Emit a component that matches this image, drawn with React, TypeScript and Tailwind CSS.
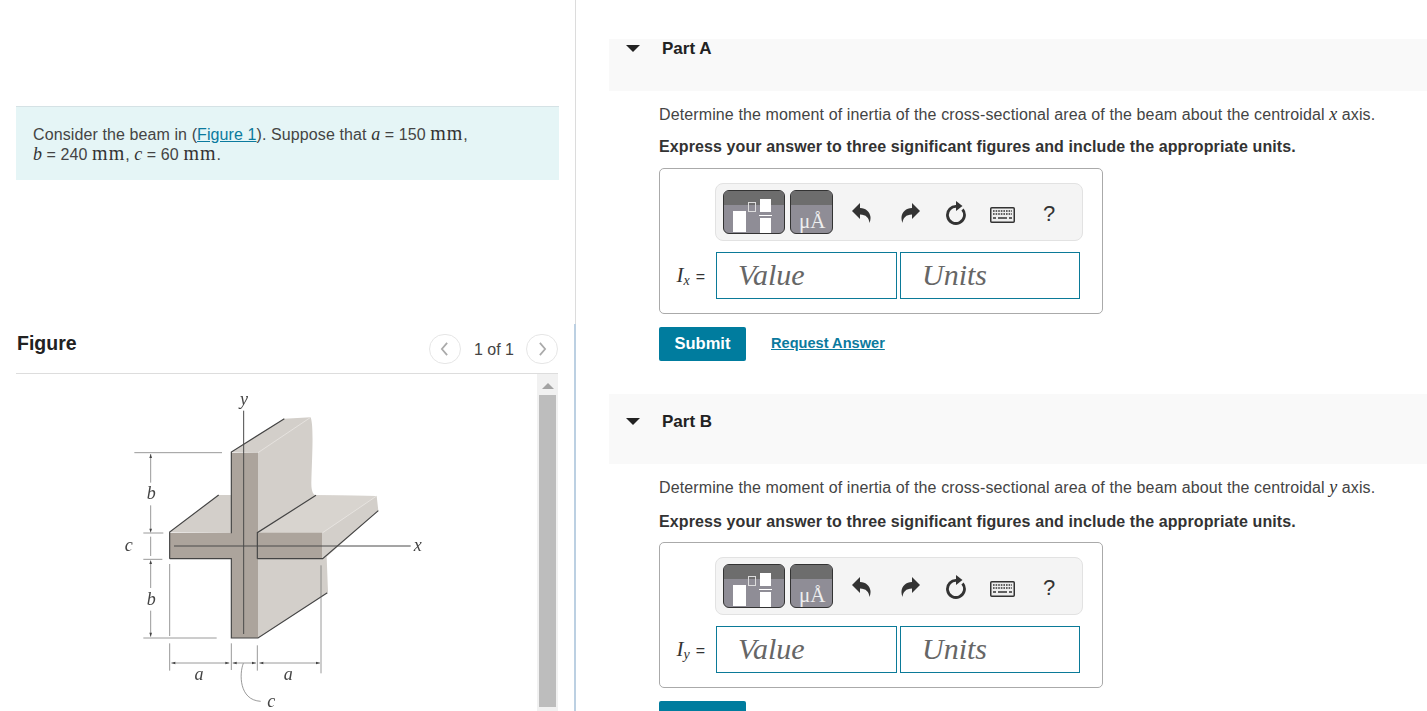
import React from 'react'

const sans = "font-['Liberation_Sans',Arial,sans-serif]"
const serif = "font-['Liberation_Serif','Times_New_Roman',serif]"

function Var({ children }: { children: React.ReactNode }) {
    return <span className={`${serif} italic text-[18px] leading-none text-[#333] tracking-normal`}>{children}</span>
}

function Mm() {
    return <span className={`${serif} text-[20px] leading-none text-[#333] tracking-[1px]`}>mm</span>
}

function BeamFigure() {
    return (
        <svg viewBox="0 0 1020 993" width={340} height={331} className="blur-[0.5px]">
            {/* top faces */}
            <path d="M394 216 L553 116 L632 112 C642 140 636 230 634 310 C634 335 640 345 648 346 L830 348 L835 392 L680 530 L684 636 L474 774 L474 218 Z" fill="#d3cfca" />
            <path d="M209 456 L356 345 L394 345 L394 458 Z" fill="#d3cfca" />
            <path d="M472 458 L648 346 L830 348 L668 460 Z" fill="#d8d4cf" />
            {/* cut section */}
            <path d="M394 218 H474 V458 H666 V536 H474 V774 H394 V536 H209 V458 H394 Z" fill="#aca49c" />
            {/* dark edges */}
            <g fill="none" stroke="#444" strokeWidth="3.5">
                <path d="M394 460 V216 L553 116" />
                <path d="M209 536 V456 L356 345" />
                <path d="M209 536 H394 V774 H474 L682 638" />
                <path d="M472 536 V458 L648 346" />
                <path d="M472 536 H668 L835 392" />
            </g>
            <g fill="none" stroke="#efece8" strokeWidth="2">
                <path d="M474 218 L632 112" />
                <path d="M668 458 L830 348" />
            </g>
            {/* axes */}
            <g fill="none" stroke="#4a4a4a" strokeWidth="3">
                <path d="M431 92 V762" />
                <path d="M222 498 H932" />
            </g>
            {/* dimension lines */}
            <g fill="none" stroke="#666" strokeWidth="2">
                <path d="M103 218 H366" />
                <path d="M130 459 H190" />
                <path d="M130 538 H187" />
                <path d="M130 774 H350" />
                <path d="M152 222 V308" />
                <path d="M152 376 V448" />
                <path d="M152 470 V528" />
                <path d="M152 546 V624" />
                <path d="M152 692 V770" />
                <path d="M209 552 V768" />
                <path d="M663 556 V880" />
                <path d="M209 790 V872" />
                <path d="M394 790 V870" />
                <path d="M472 796 V872" />
                <path d="M214 849 H388" />
                <path d="M398 849 H468" />
                <path d="M478 849 H660" />
                <path d="M430 850 C418 880 416 960 482 964" />
            </g>
            <g fill="#444">
                <path d="M152 222 l-4 12 h8 Z" />
                <path d="M152 458 l-4 -12 h8 Z" />
                <path d="M152 770 l-4 -12 h8 Z" />
                <path d="M152 540 l-4 12 h8 Z" />
                <path d="M214 849 l12 -4 v8 Z" />
                <path d="M388 849 l-12 -4 v8 Z" />
                <path d="M398 849 l12 -4 v8 Z" />
                <path d="M468 849 l-12 -4 v8 Z" />
                <path d="M478 849 l12 -4 v8 Z" />
                <path d="M660 849 l-12 -4 v8 Z" />
            </g>
            <g className={`${serif} italic`} fill="#444" fontSize="54" textAnchor="middle">
                <text x="432" y="74">y</text>
                <text x="154" y="358">b</text>
                <text x="86" y="514">c</text>
                <text x="154" y="674">b</text>
                <text x="953" y="514">x</text>
                <text x="297" y="900">a</text>
                <text x="565" y="900">a</text>
                <text x="514" y="982">c</text>
            </g>
        </svg>
    )
}

function Toolbar() {
    return (
        <div className="ml-[55px] w-[368px] h-[58px] rounded-[8px] border border-[#e2e2e2] bg-[#f4f4f4] flex items-center pl-[7px]">
            <div className="relative w-[62px] h-[44px] rounded-[6px] border border-[#333] overflow-hidden bg-[#8f8d96]">
                <div className="h-[14px] bg-[#6d6d6d]" />
                <div className="absolute left-[9px] top-[20px] w-[13px] h-[21px] bg-white" />
                <div className="absolute left-[24px] top-[11px] w-[8px] h-[10px] border border-[#ddd]" />
                <div className="absolute left-[36px] top-[8px] w-[11px] h-[13px] bg-white" />
                <div className="absolute left-[35px] top-[24px] w-[13px] h-[1px] bg-white" />
                <div className="absolute left-[36px] top-[27px] w-[11px] h-[15px] bg-white" />
            </div>
            <div className={`relative ml-[5px] w-[43px] h-[44px] rounded-[6px] border border-[#333] overflow-hidden bg-[#8f8d96] ${serif}`}>
                <div className="h-[14px] bg-[#6d6d6d]" />
                <span className="absolute left-[8px] bottom-[-1px] text-[21px] leading-[26px] text-[#eee]">μÅ</span>
            </div>
            <svg viewBox="0 0 19 20" width={19} height={20} className="ml-[19px] mt-[2px] text-[#333]" fill="currentColor">
                <path d="M0 8 L8 0 V5 C14 5 18 9 18.5 14 C18.7 16.5 18 18.5 17.5 20 C17 15 14 11.5 8 11.5 V16 Z" />
            </svg>
            <svg viewBox="0 0 19 20" width={19} height={20} className="ml-[30px] mt-[2px] text-[#333]" fill="currentColor">
                <path d="M19 8 L11 0 V5 C5 5 1 9 0.5 14 C0.3 16.5 1 18.5 1.5 20 C2 15 5 11.5 11 11.5 V16 Z" />
            </svg>
            <svg viewBox="0 0 22 24" width={22} height={24} className="ml-[25px] mt-[2px] text-[#333]">
                <path d="M12 5.5 A8.5 8.5 0 1 0 17.5 8.5" fill="none" stroke="currentColor" strokeWidth="2.8" />
                <path d="M11 0 L17.5 5 L11 10 Z" fill="currentColor" />
            </svg>
            <svg viewBox="0 0 25 16" width={25} height={16} className="ml-[23px] mt-[5px] text-[#333]">
                <rect x="0.75" y="0.75" width="23.5" height="14.5" rx="1" fill="#eee" stroke="currentColor" strokeWidth="1.5" />
                <path d="M3 4h19M3 7h19" stroke="currentColor" strokeWidth="1.6" strokeDasharray="1.6 1" />
                <path d="M3 11h3M8 11h9M19 11h3" stroke="currentColor" strokeWidth="1.5" />
            </svg>
            <span className={`${sans} ml-[28px] mt-[3px] text-[22px] text-[#333] leading-none`}>?</span>
        </div>
    )
}

function AnswerBox({ sub }: { sub: string }) {
    return (
        <div className="w-[444px] h-[146px] rounded-[5px] border border-[#aaa] bg-white pt-[14px]">
            <Toolbar />
            <div className="flex items-center mt-[11px]">
                <div className="w-[56px] flex justify-end items-baseline pr-[11px] text-[#333]">
                    <span className={`${serif} italic text-[21px] leading-none`}>I</span>
                    <span className={`${serif} italic text-[14px] leading-none translate-y-[3px] mr-[6px]`}>{sub}</span>
                    <span className={`${sans} text-[16px] leading-none`}>=</span>
                </div>
                <div className={`${serif} italic text-[30px] text-[#666] w-[181px] h-[47px] border border-[#0b7a98] pl-[21px] pb-[2px] flex items-center`}>Value</div>
                <div className={`${serif} italic text-[30px] text-[#666] ml-[3px] w-[180px] h-[47px] border border-[#0b7a98] pl-[21px] pb-[2px] flex items-center`}>Units</div>
            </div>
        </div>
    )
}

function PartHeader({ label, tall }: { label: string; tall: boolean }) {
    return (
        <div className={`relative bg-[#f9f9f9] pl-[53px] ${tall ? 'h-[70px] pt-[18px]' : 'h-[52px]'}`}>
            <div className={`absolute left-[17px] ${tall ? 'top-[24px]' : 'top-[6px]'} w-0 h-0 border-l-[7px] border-r-[7px] border-t-[7px] border-l-transparent border-r-transparent border-t-[#222]`} />
            <h2 className="text-[17px] leading-[20px] font-bold text-[#222]">{label}</h2>
        </div>
    )
}

export default function App() {
    return (
        <div className={`${sans} flex h-[711px] w-[1427px] overflow-hidden bg-white text-[#333]`}>
            {/* left column */}
            <div className="w-[576px] shrink-0 h-full border-r border-[#dcdcdc] relative">
                <div className="absolute right-[-1px] top-[324px] bottom-0 w-[2px] bg-[#bcd0e2]" />
                <div className="pt-[106px] pl-[16px] pr-[17px]">
                    <div className="h-[74px] -mr-px bg-[#e5f5f6] border-t border-[#d5e2e5] pl-[17px] pt-[16px] text-[16px] leading-[20px] tracking-[0.1px] text-[#444]">
                        <div className="h-[20px]">
                            Consider the beam in (<a className="text-[#0b7a9e] underline">Figure 1</a>). Suppose that <Var>a</Var> = 150 <Mm />,
                        </div>
                        <div className="h-[20px]">
                            <Var>b</Var> = 240 <Mm />, <Var>c</Var> = 60 <Mm />.
                        </div>
                    </div>
                    <div className="flex items-center justify-between mt-[147px] h-[47px] border-b border-[#ddd]">
                        <h2 className="pl-px text-[19.5px] font-bold text-[#222] -mt-[12px]">Figure</h2>
                        <div className="flex items-center -mt-[2px]">
                            <div className="w-[32px] h-[30px] rounded-full border border-[#e6e6e6] flex items-center justify-center">
                                <svg viewBox="0 0 10 16" width={9} height={14} fill="none" stroke="#aaa" strokeWidth="2"><path d="M8 1 L2 8 L8 15" /></svg>
                            </div>
                            <span className="ml-[13px] mr-[12px] mt-[2px] text-[16px] text-[#444]">1 of 1</span>
                            <div className="w-[32px] h-[30px] rounded-full border border-[#e6e6e6] flex items-center justify-center">
                                <svg viewBox="0 0 10 16" width={9} height={14} fill="none" stroke="#aaa" strokeWidth="2"><path d="M2 1 L8 8 L2 15" /></svg>
                            </div>
                        </div>
                    </div>
                    <div className="flex h-[337px]">
                        <div className="flex-1 pl-[84px] pt-[6px]">
                            <BeamFigure />
                        </div>
                        <div className="w-[21px] bg-[#f1f1f1] flex flex-col items-center pt-[9px]">
                            <div className="w-0 h-0 border-l-[6px] border-r-[6px] border-b-[6px] border-l-transparent border-r-transparent border-b-[#a3a3a3]" />
                            <div className="w-[17px] h-[312px] mt-[6px] bg-[#bdbdbd]" />
                        </div>
                    </div>
                </div>
            </div>

            {/* right column */}
            <div className="flex-1 pl-[33px] pt-[39px]">
                <PartHeader label="Part A" tall={false} />
                <div className="pl-[50px]">
                    <p className="mt-[13px] text-[16px] leading-[22px] tracking-[0.12px] text-[#444] whitespace-nowrap">
                        Determine the moment of inertia of the cross-sectional area of the beam about the centroidal <Var>x</Var> axis.
                    </p>
                    <p className="mt-[11px] text-[16px] leading-[20px] tracking-[0.11px] font-bold text-[#333] whitespace-nowrap">
                        Express your answer to three significant figures and include the appropriate units.
                    </p>
                    <div className="mt-[11px]"><AnswerBox sub="x" /></div>
                    <div className="flex items-center mt-[13px]">
                        <button className="w-[87px] h-[34px] pb-[2px] rounded-[2px] bg-[#007c9e] text-white text-[16.5px] font-bold">Submit</button>
                        <a className="ml-[25px] text-[14.6px] font-bold text-[#0b7a9e] underline">Request Answer</a>
                    </div>
                </div>
                <div className="mt-[33px]"><PartHeader label="Part B" tall /></div>
                <div className="pl-[50px]">
                    <p className="mt-[13px] text-[16px] leading-[22px] tracking-[0.12px] text-[#444] whitespace-nowrap">
                        Determine the moment of inertia of the cross-sectional area of the beam about the centroidal <Var>y</Var> axis.
                    </p>
                    <p className="mt-[13px] text-[16px] leading-[20px] tracking-[0.11px] font-bold text-[#333] whitespace-nowrap">
                        Express your answer to three significant figures and include the appropriate units.
                    </p>
                    <div className="mt-[10px]"><AnswerBox sub="y" /></div>
                    <div className="mt-[13px] w-[87px] h-[34px] rounded-[2px] bg-[#007c9e]" />
                </div>
            </div>
        </div>
    )
}
